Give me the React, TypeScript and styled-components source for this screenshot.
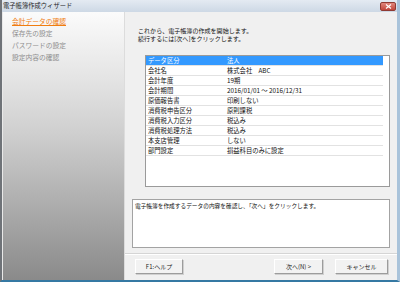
import React from "react";
import styled, { createGlobalStyle } from "styled-components";

const Global = createGlobalStyle`
  html, body { margin: 0; padding: 0; background: #ffffff; }
  body { font-family: "Noto Sans CJK JP", "Noto Sans", sans-serif; }
  * { box-sizing: border-box; }
`;

const Frame = styled.div`
  width: 400px;
  height: 282px;
  display: flex;
  flex-direction: column;
  border-left: 2px solid #6f7378;
  border-right: 3px solid #a9c3da;
  border-bottom: 2px solid #3579a3;
  overflow: hidden;
`;

const TitleBar = styled.div`
  height: 12px;
  flex: none;
  display: flex;
  align-items: center;
  justify-content: space-between;
  padding: 0 1px 0 1px;
  background: linear-gradient(#e4eaf2, #cdd8e5);
`;

const TitleText = styled.span`
  font-size: 6.3px;
  line-height: 12px;
  color: #1e1e1e;
  white-space: nowrap;
`;

const CloseButton = styled.div`
  width: 16px;
  height: 9px;
  border-radius: 2px;
  background: linear-gradient(#e0867c, #c2463c);
  border: 1px solid #8f3a33;
  display: flex;
  align-items: center;
  justify-content: center;
`;

const Body = styled.div`
  flex: 1;
  display: flex;
  min-height: 0;
`;

const Sidebar = styled.nav`
  width: 123px;
  flex: none;
  background: linear-gradient(#fbfbfb 0%, #e4e4e4 25%, #cfcfcf 45%, #8a8a8a 100%);
  border-left: 1px solid #e9e9e9;
  border-right: 1px solid #dcdcdc;
  padding: 5px 0 0 9px;
  display: flex;
  flex-direction: column;
  gap: 3px;
`;

const NavItem = styled.div<{ $active?: boolean }>`
  font-size: 6.75px;
  line-height: 9px;
  white-space: nowrap;
  color: ${(p) => (p.$active ? "#f07d10" : "#8e8e8e")};
  text-decoration: ${(p) => (p.$active ? "underline" : "none")};
`;

const Main = styled.main`
  flex: 1;
  background: #f0f0f0;
  display: flex;
  flex-direction: column;
  padding: 15px 7px 5px 7px;
`;

const Intro = styled.div`
  padding-left: 6px;
  font-size: 6.05px;
  line-height: 8px;
  color: #111;
  white-space: nowrap;
`;

const TableBox = styled.div`
  margin: 12px 0 0 13px;
  height: 132px;
  background: #ffffff;
  border: 1px solid #9a9a9a;
  display: flex;
`;

const Grid = styled.div`
  width: 237px;
  display: flex;
  flex-direction: column;
`;

const Row = styled.div<{ $selected?: boolean }>`
  height: 10px;
  display: grid;
  grid-template-columns: 79px 1fr;
  align-items: center;
  font-size: 6.3px;
  white-space: nowrap;
  background: ${(p) => (p.$selected ? "#3399ff" : "#ffffff")};
  color: ${(p) => (p.$selected ? "#ffffff" : "#111111")};
  border-bottom: 1px solid #e2e2e2;
`;

const Cell = styled.span`
  padding-left: 2px;
  line-height: 9px;
`;

const Strip = styled.div`
  flex: 1;
  background: #ffffff;
`;

const DescBox = styled.div`
  margin-top: 12px;
  height: 49px;
  background: #ffffff;
  border: 1px solid #a3a3a3;
  padding: 2px 2px;
  font-size: 5.7px;
  line-height: 8px;
  color: #111;
  white-space: nowrap;
`;

const Separator = styled.div`
  margin: 5px -7px 0 -7px;
  border-top: 1px solid #d5d5d5;
  border-bottom: 1px solid #ffffff;
`;

const ButtonRow = styled.div`
  margin-top: 4px;
  display: flex;
  align-items: center;
  padding-left: 3px;
  padding-right: 2px;
`;

const Button = styled.div<{ $w: number }>`
  width: ${(p) => p.$w}px;
  height: 15px;
  display: flex;
  align-items: center;
  justify-content: center;
  font-size: 6px;
  color: #222;
  white-space: nowrap;
  background: #f2f2f2;
  border-top: 1px solid #ffffff;
  border-left: 1px solid #ffffff;
  border-right: 1px solid #9c9c9c;
  border-bottom: 1px solid #9c9c9c;
  box-shadow: 1px 1px 0 #d0d0d0;
`;

const Spacer = styled.div`
  flex: 1;
`;

const Gap = styled.div`
  width: 12px;
`;

const rows: [string, string][] = [
  ["データ区分", "法人"],
  ["会社名", "株式会社　ABC"],
  ["会計年度", "19期"],
  ["会計期間", "2016/01/01 ～ 2016/12/31"],
  ["原価報告書", "印刷しない"],
  ["消費税申告区分", "原則課税"],
  ["消費税入力区分", "税込み"],
  ["消費税処理方法", "税込み"],
  ["本支店管理", "しない"],
  ["部門設定", "損益科目のみに設定"],
];

export default function App() {
  return (
    <>
      <Global />
      <Frame>
        <TitleBar>
          <TitleText>電子帳簿作成ウィザード</TitleText>
          <CloseButton>
            <svg width="7" height="5" viewBox="0 0 7 5">
              <path d="M1 0.5 L6 4.5 M6 0.5 L1 4.5" stroke="#ffffff" strokeWidth="1.2" />
            </svg>
          </CloseButton>
        </TitleBar>
        <Body>
          <Sidebar>
            <NavItem $active>会計データの確認</NavItem>
            <NavItem>保存先の設定</NavItem>
            <NavItem>パスワードの設定</NavItem>
            <NavItem>設定内容の確認</NavItem>
          </Sidebar>
          <Main>
            <Intro>
              これから、電子帳簿の作成を開始します。
              <br />
              続行するには[次へ]をクリックします。
            </Intro>
            <TableBox>
              <Grid>
                {rows.map(([k, v], i) => (
                  <Row key={k} $selected={i === 0}>
                    <Cell>{k}</Cell>
                    <Cell>{v}</Cell>
                  </Row>
                ))}
              </Grid>
              <Strip />
            </TableBox>
            <DescBox>電子帳簿を作成するデータの内容を確認し、「次へ」をクリックします。</DescBox>
            <Separator />
            <ButtonRow>
              <Button $w={48}>F1:ヘルプ</Button>
              <Spacer />
              <Button $w={49}>次へ(N) &gt;</Button>
              <Gap />
              <Button $w={53}>キャンセル</Button>
            </ButtonRow>
          </Main>
        </Body>
      </Frame>
    </>
  );
}
